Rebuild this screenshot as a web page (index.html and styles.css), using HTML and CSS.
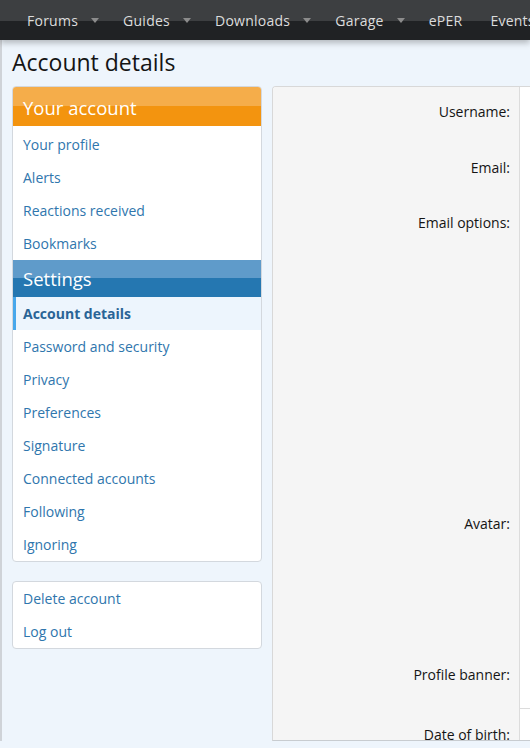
FILE: index.html
```html
<!DOCTYPE html>
<html lang="en">

<head>
  <meta charset="UTF-8">
  <meta name="viewport" content="width=device-width, initial-scale=1.0">
  <title>Account details</title>
  <link rel="stylesheet" href="styles.css">
</head>

<body>
  <nav class="nav">
    <a class="nav-item">Forums<span class="caret"></span></a>
    <a class="nav-item">Guides<span class="caret"></span></a>
    <a class="nav-item">Downloads<span class="caret"></span></a>
    <a class="nav-item">Garage<span class="caret"></span></a>
    <a class="nav-item plain">ePER</a>
    <a class="nav-item">Events<span class="caret"></span></a>
  </nav>

  <div class="page">
    <h1 class="title">Account details</h1>

    <div class="layout">
      <aside class="sidebar">
        <div class="block">
          <h3 class="block-header orange">Your account</h3>
          <ul class="menu first">
            <li><a>Your profile</a></li>
            <li><a>Alerts</a></li>
            <li><a>Reactions received</a></li>
            <li><a>Bookmarks</a></li>
          </ul>
          <h3 class="block-header blue">Settings</h3>
          <ul class="menu">
            <li class="selected"><a>Account details</a></li>
            <li><a>Password and security</a></li>
            <li><a>Privacy</a></li>
            <li><a>Preferences</a></li>
            <li><a>Signature</a></li>
            <li><a>Connected accounts</a></li>
            <li><a>Following</a></li>
            <li><a>Ignoring</a></li>
          </ul>
        </div>

        <div class="block">
          <ul class="menu">
            <li><a>Delete account</a></li>
            <li><a>Log out</a></li>
          </ul>
        </div>
      </aside>

      <main class="form">
        <div class="form-row row-username">
          <dt>Username:</dt>
          <dd></dd>
        </div>
        <div class="form-row row-email">
          <dt>Email:</dt>
          <dd></dd>
        </div>
        <div class="form-row row-options">
          <dt>Email options:</dt>
          <dd></dd>
        </div>
        <div class="form-row row-avatar">
          <dt>Avatar:</dt>
          <dd></dd>
        </div>
        <div class="form-row row-banner">
          <dt>Profile banner:</dt>
          <dd></dd>
        </div>
        <div class="form-row row-dob">
          <dt>Date of birth:</dt>
          <dd class="split"></dd>
        </div>
      </main>
    </div>
  </div>
</body>

</html>
```

FILE: styles.css
```css
html {
  overflow: hidden;
}

body {
  margin: 0;
  padding: 0;
  background-color: #eef5fc;
  color: #141414;
  font-family: 'Open Sans', 'Noto Sans', sans-serif;
  font-size: 14px;
}

/* Top navigation */
.nav {
  display: flex;
  align-items: center;
  height: 40px;
  padding-left: 15px;
  background: linear-gradient(to bottom, #3d3f41 0%, #3d3f41 52%, #202224 52%, #202224 100%);
  box-shadow: 0 3px 6px rgba(0, 0, 0, 0.25);
  white-space: nowrap;
  position: relative;
}

.nav-item {
  display: flex;
  align-items: center;
  padding: 0 12px;
  color: #dcdcdc;
  font-size: 14px;
  letter-spacing: 0.25px;
}

.nav-item.plain {
  padding-right: 16px;
}

.caret {
  display: inline-block;
  width: 0;
  height: 0;
  margin-left: 13px;
  border-left: 4.5px solid transparent;
  border-right: 4.5px solid transparent;
  border-top: 5px solid #8c8c8c;
}

.page {
  padding: 0 12px 0 10px;
  border-left: 2px solid #cfd3d8;
}

.title {
  margin: 0;
  padding: 7px 0 9px;
  font-size: 23px;
  font-weight: 400;
  line-height: 30px;
  color: #141414;
}

.layout {
  display: flex;
  gap: 10px;
  align-items: flex-start;
}

/* Sidebar */
.sidebar {
  width: 250px;
  flex-shrink: 0;
  display: flex;
  flex-direction: column;
  gap: 19px;
}

.block {
  background-color: #fff;
  border: 1px solid #d3d8de;
  border-radius: 4px;
  overflow: hidden;
}

.block-header {
  margin: 0;
  padding: 0 10px;
  font-size: 18.5px;
  font-weight: 400;
  color: #fff;
}

.block-header.orange {
  height: 39px;
  line-height: 42px;
  background: linear-gradient(to bottom, #f5ad4a 0%, #f5ad4a 50%, #f3940f 50%, #f3940f 100%);
}

.block-header.blue {
  height: 37px;
  line-height: 38px;
  background: linear-gradient(to bottom, #5f9bca 0%, #5f9bca 50%, #2577b1 50%, #2577b1 100%);
}

.menu {
  list-style: none;
  margin: 0;
  padding: 0;
}

.menu.first {
  padding-top: 2px;
}

.menu li {
  height: 33px;
  line-height: 33px;
  padding: 0 10px;
  border-left: 3px solid transparent;
  margin-left: -3px;
}

.menu li a {
  color: #2f76ad;
  font-size: 14px;
}

.menu li.selected {
  background-color: #edf5fd;
  border-left-color: #47a7eb;
  margin-left: 0;
  padding-left: 7px;
}

.menu li.selected a {
  font-weight: 700;
  color: #2a6496;
}

/* Form panel */
.form {
  flex: 1;
  min-width: 330px;
  height: 653px;
  overflow: hidden;
  background-color: #fff;
  border: 1px solid #d8d8d8;
  border-bottom-color: #c8ccd0;
  border-radius: 4px 4px 0 0;
}

.form-row {
  display: grid;
  grid-template-columns: 247px 1fr;
}

.form-row dt {
  background-color: #f5f5f5;
  border-right: 1px solid #dcdcdc;
  padding: 15px 9px 0 0;
  text-align: right;
  line-height: 20px;
  font-size: 14px;
  color: #141414;
}

.form-row dd {
  margin: 0;
}

.row-username { height: 56px; }
.row-email { height: 55px; }
.row-options { height: 301px; }
.row-avatar { height: 151px; }
.row-banner { height: 58px; }
.row-dob { height: 60px; }

.form-row dd.split {
  border-top: 1px solid #dcdcdc;
}

.row-dob dt {
  padding-top: 17px;
}
```
